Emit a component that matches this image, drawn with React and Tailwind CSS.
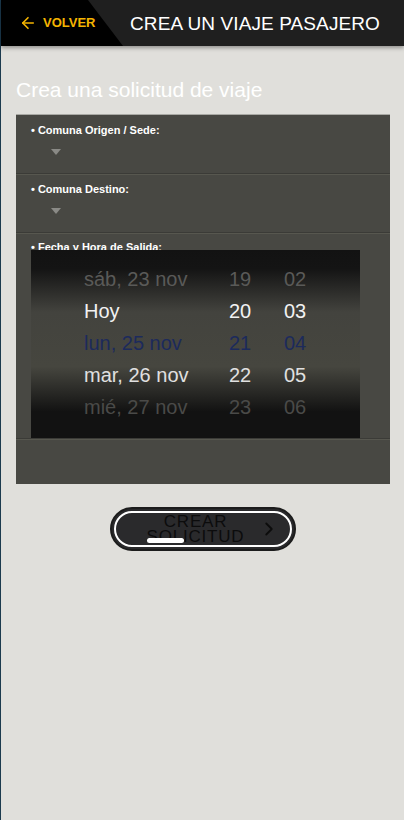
import { ArrowLeft, ChevronRight } from 'lucide-react';

const dates = [
  { d: 'sáb, 23 nov', h: '19', m: '02', c: 'text-[#5a5a58]' },
  { d: 'Hoy', h: '20', m: '03', c: 'text-[#f2f2f2]' },
  { d: 'lun, 25 nov', h: '21', m: '04', c: 'text-[#1c2a5c]' },
  { d: 'mar, 26 nov', h: '22', m: '05', c: 'text-[#e0e0e0]' },
  { d: 'mié, 27 nov', h: '23', m: '06', c: 'text-[#4a4a48]' },
];

const Field = ({ label }) => (
  <div className="h-[59px] border-b border-[#3b3b37] shadow-[0_1px_0_#57574f] px-[15px] pt-[9px]">
    <div className="text-[11px] font-bold text-white leading-[13px]">• {label}</div>
    <div className="ml-[20px] mt-[12px] w-0 h-0 border-l-[5px] border-r-[5px] border-t-[6px] border-l-transparent border-r-transparent border-t-[#8a8a86]" />
  </div>
);

const App = () => {
  return (
    <div className="min-h-[820px] bg-[#e0dfdb] border-l border-[#1b3a4e] font-['Liberation_Sans',Arial,sans-serif]">
      {/* Header */}
      <div className="relative h-[46px] bg-[#1f1f1f] flex items-center shadow-[0_2px_4px_rgba(0,0,0,0.35)]">
        <div className="h-full w-[122px] bg-black flex items-center pl-[18px] gap-[6px] [clip-path:polygon(0_0,87px_0,122px_100%,0_100%)]">
          <ArrowLeft size={18} strokeWidth={2.2} className="text-[#f5b400]" />
          <span className="text-[13px] font-bold text-[#f5b400]">VOLVER</span>
        </div>
        <div className="ml-[7px] mt-[3px] text-[19px] text-white tracking-[0.1px]">CREA UN VIAJE PASAJERO</div>
      </div>

      <h1 className="mt-[32px] ml-[15px] text-[21px] leading-[24px] text-white">Crea una solicitud de viaje</h1>

      {/* Panel */}
      <div className="mt-[12px] ml-[15px] w-[374px] h-[370px] bg-[#484843] border-t border-[#a9a9a4]">
        <Field label="Comuna Origen / Sede:" />
        <Field label="Comuna Destino:" />
        <div className="relative h-[206px] border-b border-[#3b3b37] shadow-[0_1px_0_#57574f] px-[15px] pt-[8px]">
          <div className="text-[11px] font-bold text-white leading-[13px]">• Fecha y Hora de Salida:</div>
          {/* Date picker overlay */}
          <div className="absolute left-[15px] top-[17px] w-[329px] h-[188px] overflow-hidden bg-[linear-gradient(to_bottom,#121212_0%,#141414_10%,#43433e_33%,#46463f_62%,#121212_86%,#121212_100%)]">
            <div className="pt-[13px]">
              {dates.map((r) => (
                <div key={r.d} className={`h-[32px] flex items-center text-[20px] ${r.c}`}>
                  <span className="ml-[53px] w-[145px]">{r.d}</span>
                  <span className="w-[55px]">{r.h}</span>
                  <span>{r.m}</span>
                </div>
              ))}
            </div>
          </div>
        </div>
      </div>

      {/* Submit */}
      <div className="mt-[23px] flex justify-center">
        <div className="relative w-[186px] h-[44px] rounded-full bg-[#2a2a2c] border-2 border-[#1c1c1c] p-[2px]">
          <div className="h-full rounded-full border-2 border-white flex items-center justify-center">
            <span className="ml-[-14px] text-center text-[17px] leading-[15px] tracking-[0.8px] text-[#0c0c0c]">
              CREAR<br />SOLICITUD
            </span>
            <ChevronRight size={22} strokeWidth={2} className="absolute right-[14px] text-[#0c0c0c]" />
          </div>
          <div className="absolute left-[35px] top-[29px] w-[37px] h-[5px] rounded-sm bg-white" />
        </div>
      </div>
    </div>
  );
};

export default App;
